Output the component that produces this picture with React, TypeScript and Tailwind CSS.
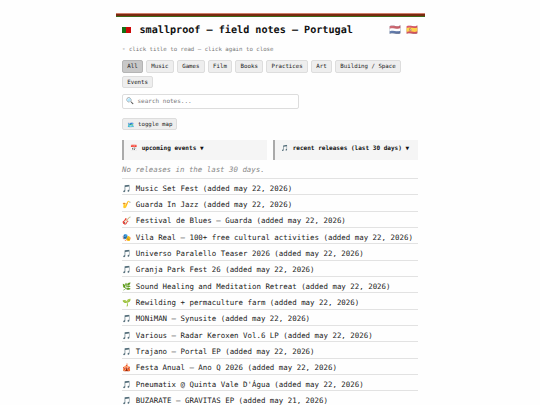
import clsx from "clsx";

const filters = ["All", "Music", "Games", "Film", "Books", "Practices", "Art", "Building / Space", "Events"];

const notes = [
  { icon: "🎵", title: "Music Set Fest", date: "may 22, 2026" },
  { icon: "🎷", title: "Guarda In Jazz", date: "may 22, 2026" },
  { icon: "🎸", title: "Festival de Blues — Guarda", date: "may 22, 2026" },
  { icon: "🎭", title: "Vila Real — 100+ free cultural activities", date: "may 22, 2026" },
  { icon: "🎵", title: "Universo Paralello Teaser 2026", date: "may 22, 2026" },
  { icon: "🎵", title: "Granja Park Fest 26", date: "may 22, 2026" },
  { icon: "🌿", title: "Sound Healing and Meditation Retreat", date: "may 22, 2026" },
  { icon: "🌱", title: "Rewilding + permaculture farm", date: "may 22, 2026" },
  { icon: "🎵", title: "MONiMAN — Synusite", date: "may 22, 2026" },
  { icon: "🎵", title: "Various — Radar Keroxen Vol.6 LP", date: "may 22, 2026" },
  { icon: "🎵", title: "Trajano — Portal EP", date: "may 22, 2026" },
  { icon: "🎪", title: "Festa Anual — Ano Q 2026", date: "may 22, 2026" },
  { icon: "🎵", title: "Pneumatix @ Quinta Vale D'Água", date: "may 22, 2026" },
  { icon: "🎵", title: "BUZARATE — GRAVITAS EP", date: "may 21, 2026" },
];

export default function App() {
  return (
    <div className="h-[405px] w-[540px] overflow-hidden bg-[#fefefe] pt-[13px] font-['DejaVu_Sans_Mono',monospace] text-[#1a1a1a] [text-rendering:geometricPrecision]">
      <main className="ml-[115.5px] w-[309px]">
        <div className="h-[4px] bg-[linear-gradient(#cf7f6c_0_1px,#7a2a10_1px_3px,#3c6a1c_3px)]" />
        <div className="px-[6.5px]">
          <header className="flex h-[27px] items-center justify-between">
            <h1 className="flex items-center text-[10.14px] font-bold text-[#111]">
              <span className="mr-[9px] h-[6px] w-[8.5px] bg-[linear-gradient(90deg,#137013_40%,#cc0808_40%)]" />
              smallproof — field notes — Portugal
            </h1>
            <span className="flex gap-[5px] pt-[2px] text-[9.6px] opacity-70">
              <span>🇳🇱</span>
              <span>🇪🇸</span>
            </span>
          </header>
          <p className="mt-[1px] h-[10px] text-[5.72px] leading-[10px] text-[#777]">◦ click title to read — click again to close</p>

          <nav className="mt-[5px] flex flex-wrap gap-x-[3.2px] gap-y-[3px]">
            {filters.map((name) => (
              <button
                key={name}
                type="button"
                className={clsx(
                  "h-[12.5px] rounded-[2px] border px-[4.23px] text-[5.76px] leading-[10.5px]",
                  name === "All" ? "border-[#b5b5b5] bg-[#c8c8c8]" : "border-[#ddd] bg-[#eee]",
                )}
              >
                {name}
              </button>
            ))}
          </nav>

          <label className="mt-[6px] flex h-[15px] w-[177px] items-center rounded-[2px] border border-[#ddd] bg-white px-[3px] text-[6px] text-[#777]">
            <span className="w-[11.5px] text-[6.4px]">🔍</span>
            search notes...
          </label>

          <button
            type="button"
            className="mt-[9px] flex h-[12px] w-[55px] items-center rounded-[2px] border border-[#ddd] bg-[#eee] pl-[4.5px] text-[5.72px] whitespace-nowrap"
          >
            <span className="w-[10.5px] pt-px text-left font-['Noto_Color_Emoji'] text-[6px]">🗺️</span>
            toggle map
          </button>

          <section className="mt-[10px] flex gap-[6px] text-[6.06px] font-bold text-[#111]">
            <div className="h-[20px] flex-1 border-l-2 border-[#aaa] bg-[#f5f5f5] pl-[6.5px] leading-[18px]">📅 upcoming events ▼</div>
            <div className="h-[20px] flex-1 border-l-2 border-[#aaa] bg-[#f5f5f5] pl-[6.5px] leading-[18px]">🎵 recent releases (last 30 days) ▼</div>
          </section>

          <p className="h-[18px] text-[7.42px] leading-[19px] text-[#888] italic">No releases in the last 30 days.</p>
          <ul className="border-t border-[#e2e2e2]">
            {notes.map((note) => (
              <li key={note.title} className="flex h-[16.35px] items-center border-b border-[#e2e2e2] pt-[3px] text-[7.43px]">
                <span className="w-[13.8px]">{note.icon}</span>
                {note.title} (added {note.date})
              </li>
            ))}
          </ul>
        </div>
      </main>
    </div>
  );
}
